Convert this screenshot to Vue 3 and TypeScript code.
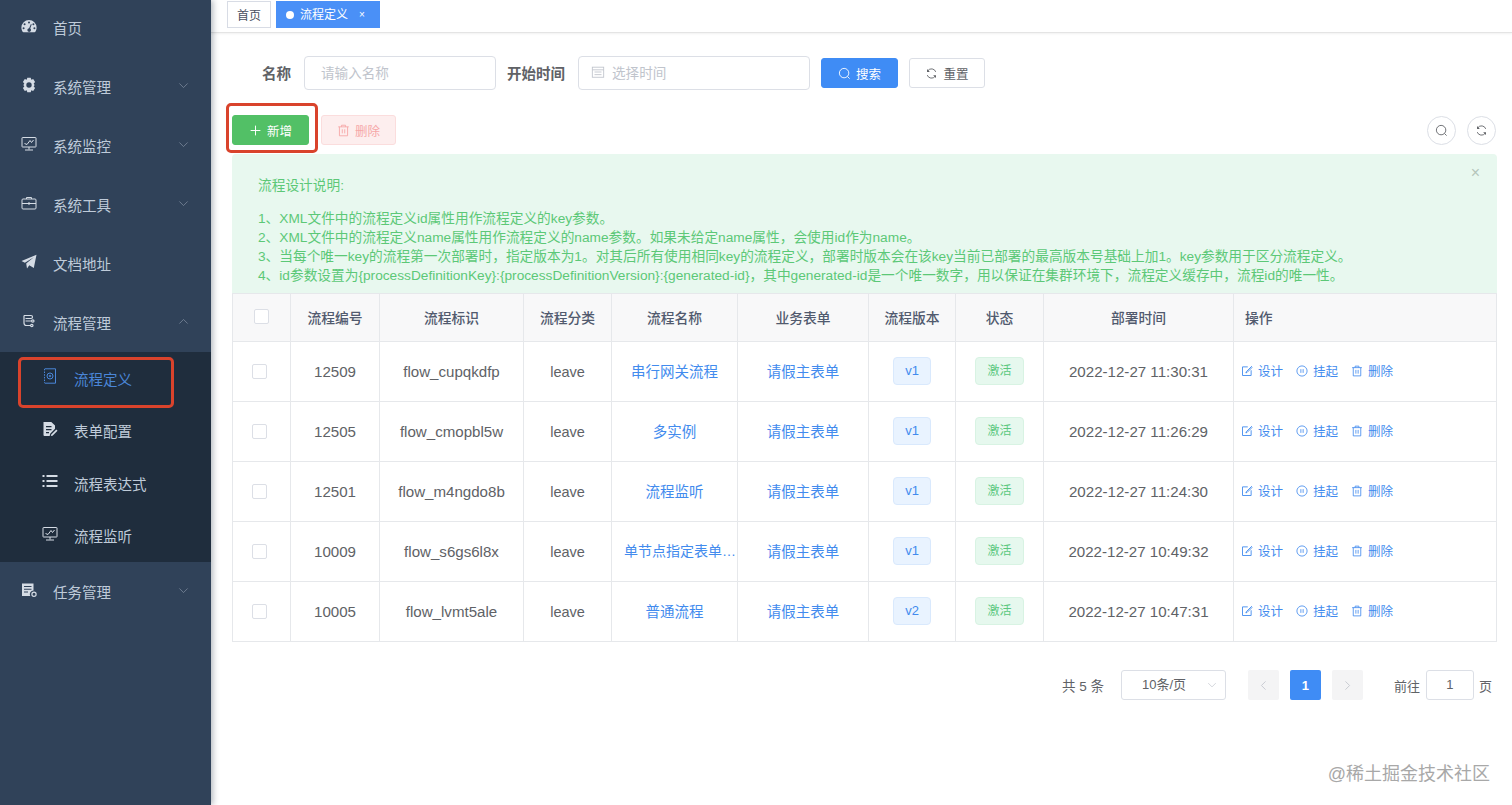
<script setup lang="ts">
interface Row { id: string; key: string; name: string; version: string; time: string; clipped?: boolean }
interface Nav { label: string; icon: string; arrow?: string }

const topNav: Nav[] = [
  { label: '首页', icon: 'gauge' },
  { label: '系统管理', icon: 'gear', arrow: 'down' },
  { label: '系统监控', icon: 'monitor', arrow: 'down' },
  { label: '系统工具', icon: 'tool', arrow: 'down' },
  { label: '文档地址', icon: 'plane' },
  { label: '流程管理', icon: 'tree', arrow: 'up' },
]
const subNav: Nav[] = [
  { label: '流程定义', icon: 'disk' },
  { label: '表单配置', icon: 'form' },
  { label: '流程表达式', icon: 'list' },
  { label: '流程监听', icon: 'monitor' },
]
const columns = ['流程编号', '流程标识', '流程分类', '流程名称', '业务表单', '流程版本', '状态', '部署时间']
const rows: Row[] = [
  { id: '12509', key: 'flow_cupqkdfp', name: '串行网关流程', version: 'v1', time: '2022-12-27 11:30:31' },
  { id: '12505', key: 'flow_cmopbl5w', name: '多实例', version: 'v1', time: '2022-12-27 11:26:29' },
  { id: '12501', key: 'flow_m4ngdo8b', name: '流程监听', version: 'v1', time: '2022-12-27 11:24:30' },
  { id: '10009', key: 'flow_s6gs6l8x', name: '单节点指定表单流程', version: 'v1', time: '2022-12-27 10:49:32', clipped: true },
  { id: '10005', key: 'flow_lvmt5ale', name: '普通流程', version: 'v2', time: '2022-12-27 10:47:31' },
]
const notes = [
  '1、XML文件中的流程定义id属性用作流程定义的key参数。',
  '2、XML文件中的流程定义name属性用作流程定义的name参数。如果未给定name属性，会使用id作为name。',
  '3、当每个唯一key的流程第一次部署时，指定版本为1。对其后所有使用相同key的流程定义，部署时版本会在该key当前已部署的最高版本号基础上加1。key参数用于区分流程定义。',
  '4、id参数设置为{processDefinitionKey}:{processDefinitionVersion}:{generated-id}，其中generated-id是一个唯一数字，用以保证在集群环境下，流程定义缓存中，流程id的唯一性。',
]
</script>

<template>
  <div class="app">
    <svg width="0" height="0" class="defs">
      <symbol id="i-gauge" viewBox="0 0 16 14"><path fill="currentColor" fill-rule="evenodd" d="M8 1a7.6 7.6 0 0 0-7.6 7.6c0 1.6.5 3 1.2 4.2.2.3.5.4.8.4h11.2c.3 0 .6-.1.8-.4.7-1.2 1.2-2.6 1.2-4.2A7.6 7.6 0 0 0 8 1ZM8 2.4a1 1 0 1 1 0 2 1 1 0 0 1 0-2ZM3.6 4.2a1 1 0 1 1 0 2 1 1 0 0 1 0-2Zm8.8 0a1 1 0 1 1 0 2 1 1 0 0 1 0-2ZM2.6 8.2a1 1 0 1 1 0 2 1 1 0 0 1 0-2Zm10.8 0a1 1 0 1 1 0 2 1 1 0 0 1 0-2ZM9.9 5l.8.4-1.5 4.2a1.8 1.8 0 1 1-1.1-.3Z"/></symbol>
      <symbol id="i-gear" viewBox="0 0 16 16"><path fill="currentColor" fill-rule="evenodd" d="M6.3.8h3.4l.6 2 1.9-.7 1.9 2.9-1.4 1.5.9 1.5-.9 1.5 1.4 1.5-1.9 2.9-1.9-.7-.6 2H6.300l-.6-2-1.900.7-1.900-2.900 1.400-1.500-.9-1.500.9-1.500L1.900 5l1.900-2.900 1.900.7ZM8 5.300a2.700 2.700 0 1 0 0 5.400 2.700 2.700 0 0 0 0-5.400Z"/></symbol>
      <symbol id="i-monitor" viewBox="0 0 16 16"><g fill="none" stroke="currentColor" stroke-width="1"><rect x="1" y="1.500" width="14" height="9.500" rx=".5"/><path d="M8 11v2.500M4 14h8M3.500 7.500l2.500 1 3-4 1.500 2 2-2.500"/></g></symbol>
      <symbol id="i-tool" viewBox="0 0 16 16"><g fill="none" stroke="currentColor" stroke-width="1"><rect x="1" y="4" width="14" height="10" rx="1"/><path d="M5.500 4V2.500h5V4M1 8.500h14"/><path d="M8 7.500v2" stroke-width="2"/></g></symbol>
      <symbol id="i-plane" viewBox="0 0 16 16"><path fill="currentColor" d="M15.500.8 12.800 14 8.300 11.300 6 14.500l-.8-4.900L12.800 3.200 3.900 8.800.5 7.100Z"/></symbol>
      <symbol id="i-tree" viewBox="0 0 16 16"><path fill="none" stroke="currentColor" stroke-width="1.200" d="M3 2.500h7a1.500 1.500 0 0 1 0 3H4.500M3 2.500v7.500a2.500 2.500 0 0 0 2.500 2.500H9.500M4.500 8H10.500m2.500 0a1.200 1.200 0 1 1-2.400 0 1.200 1.200 0 0 1 2.400 0Zm-1 4.500a1.200 1.200 0 1 1-2.400 0 1.200 1.200 0 0 1 2.400 0Z"/></symbol>
      <symbol id="i-disk" viewBox="0 0 16 16"><g fill="none" stroke="currentColor" stroke-width="1"><path d="M3 .8h10.500v14.400H3"/><path d="M2.500 .8v14.400" stroke-dasharray="1.500 1.200"/><circle cx="8" cy="8" r="3"/><circle cx="8" cy="8" r=".8"/></g></symbol>
      <symbol id="i-form" viewBox="0 0 16 16"><path fill="currentColor" fill-rule="evenodd" d="M1.500 1h7.800L13 4.600v3.200l-4.800 4.900-.5 2.300H2.500a1 1 0 0 1-1-1ZM4 5v1.300h5.500V5Zm0 3v1.300h5.500V8Zm0 3v1.300h3V11Z"/><path fill="currentColor" d="m14.300 8.500 1.200 1.200-5 5-1.600.4.400-1.600Z"/></symbol>
      <symbol id="i-list" viewBox="0 0 16 16"><path fill="currentColor" d="M.5 2h2v2h-2Zm4 0h11v2h-11Zm-4 5h2v2h-2Zm4 0h11v2h-11Zm-4 5h2v2h-2Zm4 0h11v2h-11Z"/></symbol>
      <symbol id="i-task" viewBox="0 0 16 16"><path fill="currentColor" fill-rule="evenodd" d="M1 1.500h11.500v7a3.800 3.800 0 0 0-3.300 5.500H1ZM3 4v1.100h7.500V4Zm0 2.700v1.100h7.500V6.700Zm0 2.700v1.100h4V9.400Z"/><circle cx="13" cy="12.300" r="2.100" fill="none" stroke="currentColor" stroke-width="1.200"/></symbol>
      <symbol id="i-search" viewBox="0 0 16 16"><g fill="none" stroke="currentColor" stroke-width="1.100"><circle cx="7.500" cy="7.500" r="5.800"/><path d="m11.700 11.700 2.600 2.600"/></g></symbol>
      <symbol id="i-refresh" viewBox="0 0 16 16"><g fill="none" stroke="currentColor" stroke-width="1.100"><path d="M13.200 6A5.500 5.500 0 0 0 3.500 4.600M2.800 10a5.500 5.500 0 0 0 9.700 1.400"/></g><path fill="currentColor" d="M2.500 2.500v3.500H6Zm11 11V10H10Z"/></symbol>
      <symbol id="i-trash" viewBox="0 0 16 16"><g fill="none" stroke="currentColor" stroke-width="1.100"><path d="M1.500 3.500h13M5.500 3.500V1.500h5v2M3 3.500V14.500h10V3.500M6.500 6.500v5M9.500 6.500v5"/></g></symbol>
      <symbol id="i-edit" viewBox="0 0 16 16"><g fill="none" stroke="currentColor" stroke-width="1.200"><path d="M9 2.500H2v11.500h11.500V7"/><path d="M14.500 1.500 7 9l-.5 1.500L8 10l7-7"/></g></symbol>
      <symbol id="i-pause" viewBox="0 0 16 16"><g fill="none" stroke="currentColor" stroke-width="1.100"><circle cx="8" cy="8" r="6.800"/><path d="M6.500 5.500v5M9.500 5.500v5"/></g></symbol>
      <symbol id="i-date" viewBox="0 0 16 16"><g fill="none" stroke="currentColor" stroke-width="1"><rect x="1.500" y="2.500" width="13" height="11.500"/><path d="M1.500 5.500h13M4 8h8M4 11h8"/></g></symbol>
      <symbol id="i-plus" viewBox="0 0 16 16"><path fill="none" stroke="currentColor" stroke-width="1.200" d="M8 2v12M2 8h12"/></symbol>
      <symbol id="i-down" viewBox="0 0 16 16"><path fill="none" stroke="currentColor" stroke-width="1.100" d="m2 5 6 6 6-6"/></symbol>
      <symbol id="i-up" viewBox="0 0 16 16"><path fill="none" stroke="currentColor" stroke-width="1.100" d="m2 11 6-6 6 6"/></symbol>
      <symbol id="i-left" viewBox="0 0 16 16"><path fill="none" stroke="currentColor" stroke-width="1.200" d="m11 2-6 6 6 6"/></symbol>
      <symbol id="i-right" viewBox="0 0 16 16"><path fill="none" stroke="currentColor" stroke-width="1.200" d="m5 2 6 6-6 6"/></symbol>
    </svg>

    <aside class="sidebar">
      <nav>
        <div v-for="item in topNav" :key="item.label" class="nav-item">
          <svg class="nav-icon"><use :href="'#i-' + item.icon" /></svg>
          <span>{{ item.label }}</span>
          <svg v-if="item.arrow" class="nav-arrow"><use :href="'#i-' + item.arrow" /></svg>
        </div>
        <div class="submenu">
          <div v-for="(item, i) in subNav" :key="item.label" class="sub-item" :class="{ active: i === 0 }">
            <svg class="nav-icon"><use :href="'#i-' + item.icon" /></svg>
            <span>{{ item.label }}</span>
            <i v-if="i === 0" class="mark mark-sub"></i>
          </div>
        </div>
        <div class="nav-item">
          <svg class="nav-icon"><use href="#i-task" /></svg>
          <span>任务管理</span>
          <svg class="nav-arrow"><use href="#i-down" /></svg>
        </div>
      </nav>
    </aside>

    <main class="main">
      <header class="tags">
        <span class="tag">首页</span>
        <span class="tag tag-on"><i class="dot"></i>流程定义<em class="tag-x">×</em></span>
      </header>

      <section class="content">
        <form class="search" @submit.prevent>
          <label class="lbl lbl-name">名称</label>
          <div class="input input-name">请输入名称</div>
          <label class="lbl lbl-time">开始时间</label>
          <div class="input input-time"><svg class="ic-date"><use href="#i-date" /></svg>选择时间</div>
          <button class="btn btn-blue"><svg class="ic"><use href="#i-search" /></svg>搜索</button>
          <button class="btn btn-plain"><svg class="ic"><use href="#i-refresh" /></svg>重置</button>
        </form>

        <div class="toolbar">
          <button class="btn btn-green"><svg class="ic"><use href="#i-plus" /></svg>新增<i class="mark mark-add"></i></button>
          <button class="btn btn-red"><svg class="ic"><use href="#i-trash" /></svg>删除</button>
          <div class="tools">
            <span class="round"><svg class="ic"><use href="#i-search" /></svg></span>
            <span class="round"><svg class="ic"><use href="#i-refresh" /></svg></span>
          </div>
        </div>

        <div class="alert">
          <span class="alert-x">×</span>
          <p class="alert-title">流程设计说明:</p>
          <p v-for="n in notes" :key="n" class="alert-line">{{ n }}</p>
        </div>

        <table class="table">
          <colgroup>
            <col class="c1" /><col class="c2" /><col class="c3" /><col class="c4" /><col class="c5" />
            <col class="c6" /><col class="c7" /><col class="c8" /><col class="c9" /><col />
          </colgroup>
          <thead>
            <tr>
              <th><span class="check check-head"></span></th>
              <th v-for="c in columns" :key="c">{{ c }}</th>
              <th class="th-op">操作</th>
            </tr>
          </thead>
          <tbody>
            <tr v-for="r in rows" :key="r.id">
              <td><span class="check"></span></td>
              <td class="wide">{{ r.id }}</td>
              <td class="wide">{{ r.key }}</td>
              <td>leave</td>
              <td class="link" :class="{ clipped: r.clipped }"><div class="clip">{{ r.name }}</div></td>
              <td class="link">请假主表单</td>
              <td><span class="pill pill-blue">{{ r.version }}</span></td>
              <td><span class="pill pill-green">激活</span></td>
              <td class="wide">{{ r.time }}</td>
              <td class="ops">
                <span class="op"><svg class="ic"><use href="#i-edit" /></svg>设计</span>
                <span class="op"><svg class="ic"><use href="#i-pause" /></svg>挂起</span>
                <span class="op"><svg class="ic"><use href="#i-trash" /></svg>删除</span>
              </td>
            </tr>
          </tbody>
        </table>

        <div class="pager">
          <span class="total">共 5 条</span>
          <span class="size">10条/页<svg class="size-arrow"><use href="#i-down" /></svg></span>
          <span class="pg pg-off"><svg class="pg-ic"><use href="#i-left" /></svg></span>
          <span class="pg pg-on">1</span>
          <span class="pg pg-off pg-last"><svg class="pg-ic"><use href="#i-right" /></svg></span>
          <span class="goto">前往</span>
          <span class="goto-box">1</span>
          <span class="goto-end">页</span>
        </div>
      </section>
    </main>

    <div class="watermark">@稀土掘金技术社区</div>
  </div>
</template>

<style>
html, body { margin: 0; overflow: hidden; background: #fff; }
</style>

<style scoped>
.app {
  display: flex;
  position: relative;
  width: 1512px;
  height: 805px;
  overflow: hidden;
  font-family: "Liberation Sans", "Noto Sans CJK SC", sans-serif;
  color: #606266;
}
.defs { position: absolute; }

/* sidebar */
.sidebar {
  flex: 0 0 211px;
  background: #304259;
  color: #bfcbd9;
  font-size: 14.5px;
  box-shadow: 2px 0 6px rgba(0, 21, 41, .3);
  z-index: 2;
}
.nav-item {
  display: flex;
  align-items: center;
  height: 59px;
  padding-left: 21px;
  position: relative;
}
.nav-item:first-child { height: 55px; margin-bottom: 2px; }
.nav-icon { width: 16px; height: 16px; margin-right: 16px; margin-top: -4px; color: #d5dce5; flex: none; }
.nav-arrow { position: absolute; left: 178px; top: 23px; width: 11px; height: 11px; color: #7f8da0; }
.submenu { background: #1f2d3d; height: 210px; }
.sub-item {
  display: flex;
  align-items: center;
  height: 52.5px;
  padding-left: 42px;
  position: relative;
}
.active { color: #4a86d8; }
.active .nav-icon { color: #4a86d8; }
.mark { position: absolute; border: 3px solid #d9432c; border-radius: 5px; box-sizing: border-box; pointer-events: none; }
.mark-sub { left: 18px; top: 5px; width: 156px; height: 51px; }

/* main */
.main { flex: 1; min-width: 0; display: flex; flex-direction: column; }
.tags {
  display: flex;
  gap: 5px;
  height: 33px;
  box-sizing: border-box;
  padding: 1px 0 0 16px;
  border-bottom: 1px solid #e4e4e4;
  box-shadow: 0 1px 2px rgba(0, 0, 0, .06);
}
.tag {
  height: 27px;
  box-sizing: border-box;
  line-height: 28px;
  padding: 0 9px;
  font-size: 12px;
  color: #495060;
  border: 1px solid #d8dce5;
}
.tag-on {
  display: flex;
  align-items: center;
  width: 104px;
  padding-top: 1px;
  background: #4a90f7;
  border-color: #4a90f7;
  color: #fff;
}
.dot { width: 8px; height: 8px; border-radius: 50%; background: #fff; margin-right: 6px; }
.tag-x { font-style: normal; font-size: 10px; margin-left: 11px; }
.content { padding: 0 15px 0 21px; }

.search { display: flex; align-items: center; height: 34px; margin-top: 23px; }
.lbl { font-size: 14.500px; font-weight: 700; color: #606266; padding-bottom: 2px; }
.lbl-name { margin-left: 30px; margin-right: 13px; }
.lbl-time { margin-left: 11px; margin-right: 13px; }
.input {
  display: flex;
  align-items: center;
  height: 34px;
  box-sizing: border-box;
  padding-bottom: 2px;
  border: 1px solid #dcdfe6;
  border-radius: 4px;
  font-size: 13.600px;
  color: #c0c4cc;
}
.input-name { width: 192px; padding-left: 16px; }
.input-time { width: 232px; padding-left: 12px; }
.ic-date { width: 14px; height: 14px; margin-right: 7px; }
.btn {
  position: relative;
  display: inline-flex;
  align-items: center;
  justify-content: center;
  height: 30px;
  box-sizing: border-box;
  padding: 0;
  border: 1px solid transparent;
  border-radius: 3px;
  font: inherit;
  font-size: 12.500px;
}
.ic { width: 13px; height: 13px; margin-right: 5px; flex: none; }
.btn-blue { width: 77px; margin-left: 11px; background: #3f8cf5; border-color: #3f8cf5; color: #fff; }
.btn-plain { width: 76px; margin-left: 11px; background: #fff; border-color: #dcdfe6; color: #606266; }
.toolbar { display: flex; align-items: center; height: 30px; margin-top: 25px; }
.btn-green { width: 77px; background: #52c066; border-color: #52c066; color: #fff; }
.btn-red { width: 75px; margin-left: 12px; background: #fdeeee; border-color: #fbdddd; color: #f6a7a7; }
.mark-add { left: -7px; top: -13px; width: 92px; height: 50px; }
.tools { margin-left: auto; display: flex; gap: 11px; padding-right: 1px; }
.round {
  display: flex;
  align-items: center;
  justify-content: center;
  width: 29px;
  height: 29px;
  box-sizing: border-box;
  border: 1px solid #dcdfe6;
  border-radius: 50%;
  color: #606266;
}
.round .ic { margin: 0; }

.alert {
  position: relative;
  height: 139px;
  box-sizing: border-box;
  margin-top: 9px;
  padding: 22px 26px 0;
  background: #e8f8ef;
  border-radius: 4px 4px 0 0;
  color: #5cc877;
  font-size: 13.700px;
  line-height: 19px;
}
.alert p { margin: 0; white-space: nowrap; }
.alert-title { margin-bottom: 14px !important; }
.alert-x { position: absolute; right: 17px; top: 9px; font-size: 16px; color: #b5c5bb; }

.table { width: 1265px; border-collapse: collapse; table-layout: fixed; font-size: 14.500px; color: #606266; }
.c1 { width: 58px; } .c2 { width: 89px; } .c3 { width: 144px; } .c4 { width: 88px; } .c5 { width: 126px; }
.c6 { width: 131px; } .c7 { width: 87px; } .c8 { width: 88px; } .c9 { width: 190px; }
th, td { box-sizing: border-box; border: 1px solid #e6e8eb; text-align: center; padding: 0; }
th { height: 48px; padding-bottom: 2px; background: #f8f8f9; color: #515a6e; font-size: 13.800px; font-weight: 500; }
td { height: 60px; }
.wide { font-size: 15.100px; }
.th-op { text-align: left; padding-left: 11px; }
.check { display: inline-block; width: 15px; height: 15px; box-sizing: border-box; border: 1px solid #dcdfe6; border-radius: 2px; background: #fff; vertical-align: middle; margin: -2px 4px 0 0; }
.check-head { margin: -1px 0 0; }
.link { color: #428bee; padding-bottom: 3px; }
.clip { overflow: hidden; white-space: nowrap; text-overflow: ellipsis; }
.clipped .clip { padding-left: 12px; text-align: left; font-size: 14px; }
.pill {
  display: inline-block;
  height: 28px;
  line-height: 26px;
  box-sizing: border-box;
  padding: 0 11px;
  font-size: 12px;
  border-radius: 4px;
  border: 1px solid;
  vertical-align: middle;
  margin-top: -2px;
}
.pill-blue { background: #e9f3ff; border-color: #d9e9fd; color: #428bee; font-size: 13px; }
.pill-green { background: #e6f8ee; border-color: #d8f3e3; color: #5cc880; }
.ops { text-align: left; padding: 0 0 2px 7px; white-space: nowrap; }
.op { display: inline-flex; align-items: center; font-size: 12.500px; color: #428bee; margin-right: 13px; }
.op .ic { width: 12px; height: 12px; margin-right: 5px; }

.pager { display: flex; align-items: center; height: 30px; margin-top: 28px; padding-right: 5px; justify-content: flex-end; font-size: 13px; }
.total { margin-right: 17px; font-size: 13.500px; }
.size {
  position: relative;
  width: 105px;
  height: 30px;
  box-sizing: border-box;
  border: 1px solid #dcdfe6;
  border-radius: 3px;
  line-height: 28px;
  padding-left: 20px;
  margin-right: 22px;
}
.size-arrow { position: absolute; right: 8px; top: 9px; width: 10px; height: 10px; color: #c0c4cc; }
.pg { display: flex; align-items: center; justify-content: center; width: 31px; height: 30px; border-radius: 2px; margin-right: 11px; }
.pg-off { background: #f4f4f5; color: #c0c4cc; }
.pg-last { margin-right: 0; }
.pg-on { background: #3f8cf5; color: #fff; font-weight: 700; }
.pg-ic { width: 11px; height: 11px; }
.goto { margin-left: 31px; margin-right: 6px; }
.goto-box {
  width: 48px;
  height: 30px;
  box-sizing: border-box;
  border: 1px solid #dcdfe6;
  border-radius: 3px;
  text-align: center;
  line-height: 28px;
  margin-right: 5px;
}
.watermark {
  position: absolute;
  right: 22px;
  top: 759px;
  font-size: 18px;
  color: #a8a8a8;
  z-index: 3;
}
</style>
